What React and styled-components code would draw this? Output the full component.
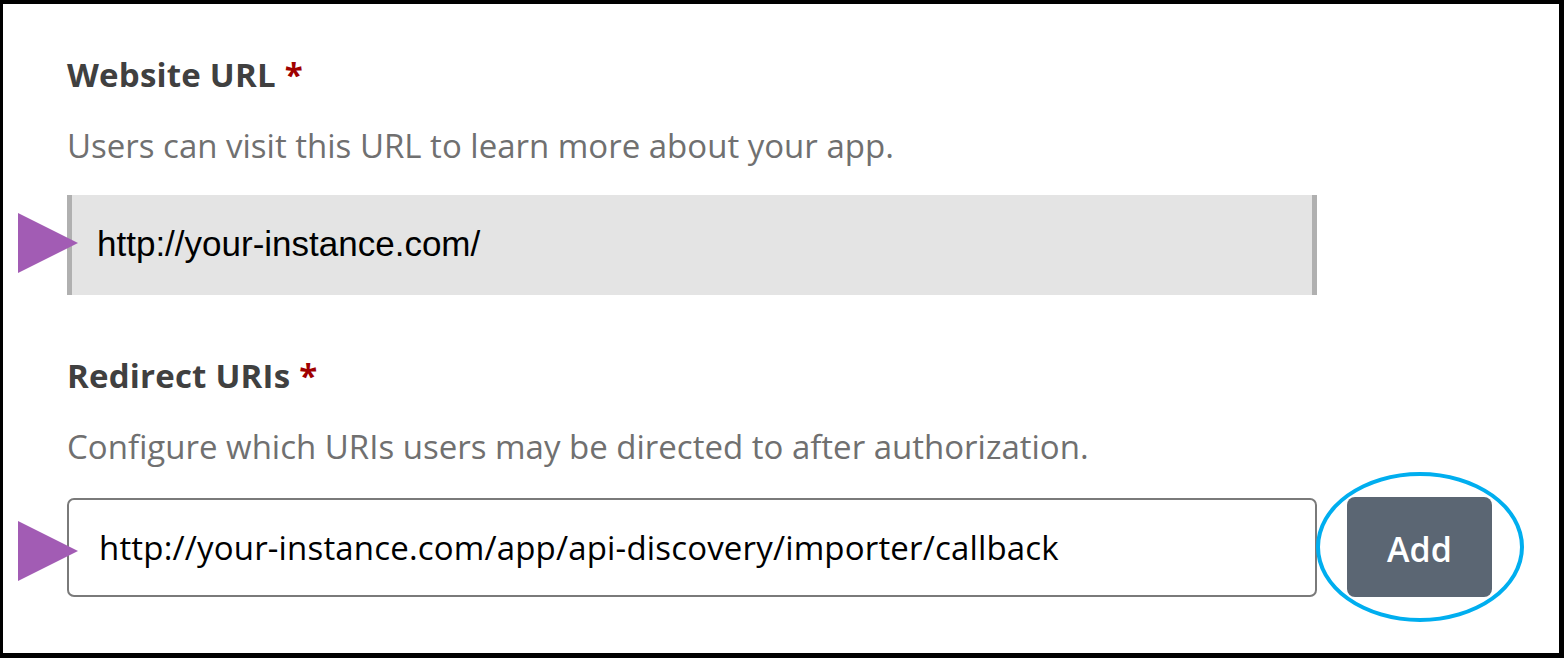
import styled, { createGlobalStyle } from "styled-components";

const GlobalStyle = createGlobalStyle`
  html, body {
    margin: 0;
    padding: 0;
    background: #ffffff;
  }
  body {
    font-family: "Open Sans", "Noto Sans", sans-serif;
  }
`;

const Frame = styled.div`
  box-sizing: border-box;
  width: 1564px;
  height: 658px;
  border-style: solid;
  border-color: #000000;
  border-width: 4px 5px 5px 3px;
  background: #ffffff;
  padding: 51px 0 0 64px;
  display: flex;
  flex-direction: column;
`;

const Field = styled.section`
  display: flex;
  flex-direction: column;
  margin-bottom: ${(p) => p.$after || 0}px;
`;

const Label = styled.h2`
  margin: 0;
  font-size: 33px;
  line-height: 40px;
  font-weight: 700;
  letter-spacing: 0.2px;
  color: #404040;
`;

const Required = styled.span`
  color: #a00000;
  margin-left: 9px;
`;

const Hint = styled.p`
  margin: 31px 0 0;
  font-size: 33px;
  line-height: 40px;
  font-weight: 400;
  color: #707070;
`;

const InputRow = styled.div`
  position: relative;
  display: flex;
  align-items: center;
  gap: 30px;
  margin-top: ${(p) => p.$top}px;
`;

const Marker = styled.svg`
  position: absolute;
  left: -49px;
  top: ${(p) => p.$top}px;
  width: 60px;
  height: 60px;
`;

const ReadOnlyValue = styled.div`
  box-sizing: border-box;
  width: 1250px;
  height: 100px;
  display: flex;
  align-items: center;
  padding: 0 0 3px 25px;
  background: #e4e4e4;
  border-left: 5px solid #b0b0b0;
  border-right: 5px solid #b0b0b0;
  font-family: "Liberation Sans", Arial, sans-serif;
  font-size: 35px;
  color: #000000;
`;

const TextBox = styled.div`
  box-sizing: border-box;
  width: 1250px;
  height: 99px;
  display: flex;
  align-items: center;
  padding-left: 30px;
  border: 2px solid #7a7a7a;
  border-radius: 7px;
  background: #ffffff;
  font-size: 33px;
  letter-spacing: 0.17px;
  color: #000000;
`;

const ButtonWrap = styled.div`
  position: relative;
`;

const AddButton = styled.button`
  width: 145px;
  height: 100px;
  border: none;
  border-radius: 8px;
  background: #5b6673;
  color: #ffffff;
  font-family: "Open Sans", "Noto Sans", sans-serif;
  font-size: 34px;
  font-weight: 600;
  padding: 4px 0 0;
`;

const Highlight = styled.div`
  position: absolute;
  left: -31px;
  top: -25px;
  width: 208px;
  height: 150px;
  box-sizing: border-box;
  border: 4.5px solid #00aeef;
  border-radius: 50%;
  pointer-events: none;
`;

const Pointer = ({ top }) => (
  <Marker $top={top} viewBox="0 0 60 60">
    <polygon points="0,0 60,30 0,60" fill="#a25cb4" />
  </Marker>
);

export default function App() {
  return (
    <>
      <GlobalStyle />
      <Frame>
        <Field $after={61}>
          <Label>
            Website URL<Required>*</Required>
          </Label>
          <Hint>Users can visit this URL to learn more about your app.</Hint>
          <InputRow $top={29}>
            <Pointer top={18} />
            <ReadOnlyValue>http://your-instance.com/</ReadOnlyValue>
          </InputRow>
        </Field>
        <Field>
          <Label>
            Redirect URIs<Required>*</Required>
          </Label>
          <Hint>Configure which URIs users may be directed to after authorization.</Hint>
          <InputRow $top={30}>
            <Pointer top={24} />
            <TextBox>http://your-instance.com/app/api-discovery/importer/callback</TextBox>
            <ButtonWrap>
              <AddButton>Add</AddButton>
              <Highlight />
            </ButtonWrap>
          </InputRow>
        </Field>
      </Frame>
    </>
  );
}
